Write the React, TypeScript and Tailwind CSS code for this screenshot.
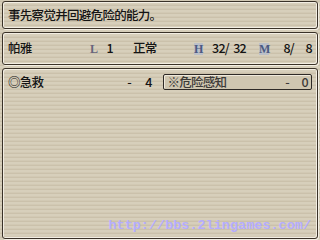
export default function App() {
  const paper =
    'bg-[repeating-linear-gradient(0deg,#d7cfbb_0px,#d7cfbb_2px,#cbc1ab_2px,#cbc1ab_3px,#d2c9b4_3px,#d2c9b4_4px)]';
  const panel =
    'border border-[#3a3228] rounded-[3px] shadow-[inset_1px_1px_0_#f3eee3,inset_-1px_-1px_0_#f3eee3,1px_1px_0_#f3eee3]';
  const cjk = "font-['Noto_Sans_CJK_SC','Noto_Sans',sans-serif] font-medium text-[12.5px] tracking-[-0.7px] leading-none text-[#141414]";
  const tag = "font-['Liberation_Serif',serif] font-bold text-[12px] leading-none tracking-normal";

  return (
    <div className={`w-[320px] h-[240px] ${paper} flex flex-col gap-[3px] pl-[2px] pr-[2px] pt-[1px] pb-[1px] overflow-hidden`}>
      <div className={`${panel} h-[28px] flex items-center px-[5px] ${cjk}`}>
        事先察觉并回避危险的能力。
      </div>

      <div className={`${panel} h-[33px] flex items-center px-[5px] ${cjk}`}>
        <span className="w-[82px]">帕雅</span>
        <span className={`${tag} w-[9px] text-[#66647c]`}>L</span>
        <span className="w-[14px] text-right">1</span>
        <span className="w-[20px]" />
        <span className="w-[25px]">正常</span>
        <span className="w-[36px]" />
        <span className={`${tag} w-[9px] text-center bg-[#bcc0c8] text-[#4b5a82]`}>H</span>
        <span className="w-[26px] text-right">32/</span>
        <span className="w-[17px] text-right">32</span>
        <span className="w-[13px]" />
        <span className={`${tag} w-[10px] text-center bg-[#bcc0c8] text-[#4b5a82]`}>M</span>
        <span className="w-[25px] text-right">8/</span>
        <span className="w-[18px] text-right">8</span>
      </div>

      <div className={`${panel} flex-1 flex flex-col px-[5px] pt-[5px] pb-[4px]`}>
        <div className={`flex items-center h-[16px] ${cjk}`}>
          <span className="w-[115px]">◎急救</span>
          <span className="w-[10px] text-right">-</span>
          <span className="w-[21px] text-right">4</span>
          <span className="w-[12px]" />
          <div className="w-[151px] h-[16px] flex items-center px-[3px] border border-[#2e2a26] rounded-[2px] bg-[#cfc6b0] shadow-[inset_1px_1px_0_#efe9dc] text-[#3c3a38]">
            <span className="flex-1">※危险感知</span>
            <span className="w-[6px] text-right">-</span>
            <span className="w-[19px] text-right">0</span>
          </div>
        </div>
        <div className="flex-1" />
        <div className="text-right font-['Liberation_Mono',monospace] font-bold text-[13.5px] leading-none text-[#b4acff] pr-[1px] mb-[2px]">
          http://bbs.2lingames.com/
        </div>
      </div>
    </div>
  );
}
